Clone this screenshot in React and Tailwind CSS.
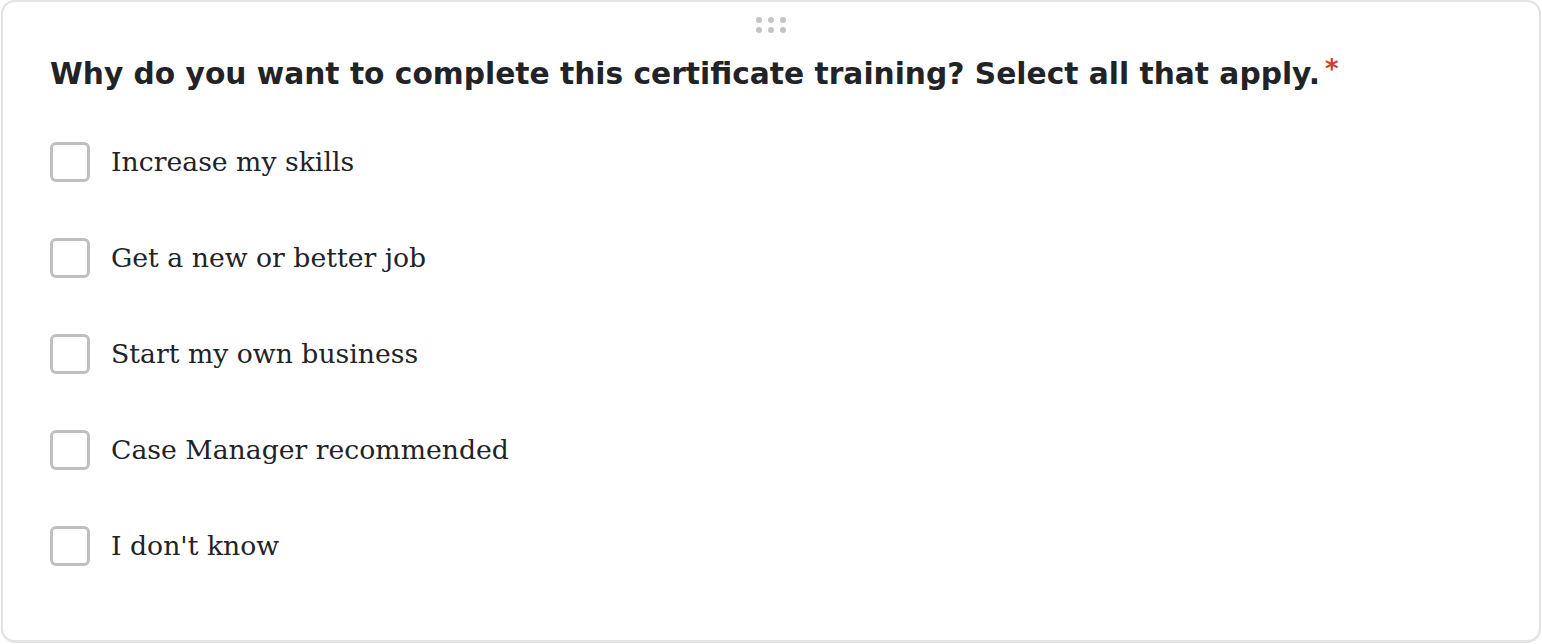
const OPTIONS = [
  'Increase my skills',
  'Get a new or better job',
  'Start my own business',
  'Case Manager recommended',
  "I don't know",
];

function DragHandle() {
  return (
    <div className="grid grid-cols-3 gap-x-[6px] gap-y-[4px] w-max mx-auto">
      {[0, 1, 2, 3, 4, 5].map((i) => (
        <span key={i} className="block w-[6px] h-[6px] rounded-full bg-[#c4c4c4]" />
      ))}
    </div>
  );
}

export default function App() {
  return (
    <div className="h-[644px] bg-white">
      <div className="h-[642px] mx-[1px] bg-white border-2 border-[#e3e3e6] rounded-[14px] px-[47px] pt-[15px] shadow-[0_1px_0_#e6e6e9]">
        <DragHandle />

        <h2
          className="mt-[23px] text-[#222326] font-bold text-[29.7px] leading-[36px] flex items-start"
          style={{ fontFamily: '"DejaVu Sans", sans-serif' }}
        >
          <span>Why do you want to complete this certificate training? Select all that apply.</span>
          <span className="ml-[5px] text-[#d33b2c] text-[26px] leading-[26px]">*</span>
        </h2>

        <div className="mt-[50px] flex flex-col gap-[56px]">
          {OPTIONS.map((label) => (
            <label key={label} className="flex items-center gap-[21px] h-[40px] cursor-pointer">
              <span className="w-[40px] h-[40px] border-[3px] border-[#bfbfbf] rounded-[6px] bg-white shrink-0" />
              <span
                className="text-[#222326] text-[26.7px] leading-[40px]"
                style={{ fontFamily: '"DejaVu Serif", serif' }}
              >
                {label}
              </span>
            </label>
          ))}
        </div>
      </div>
    </div>
  );
}
